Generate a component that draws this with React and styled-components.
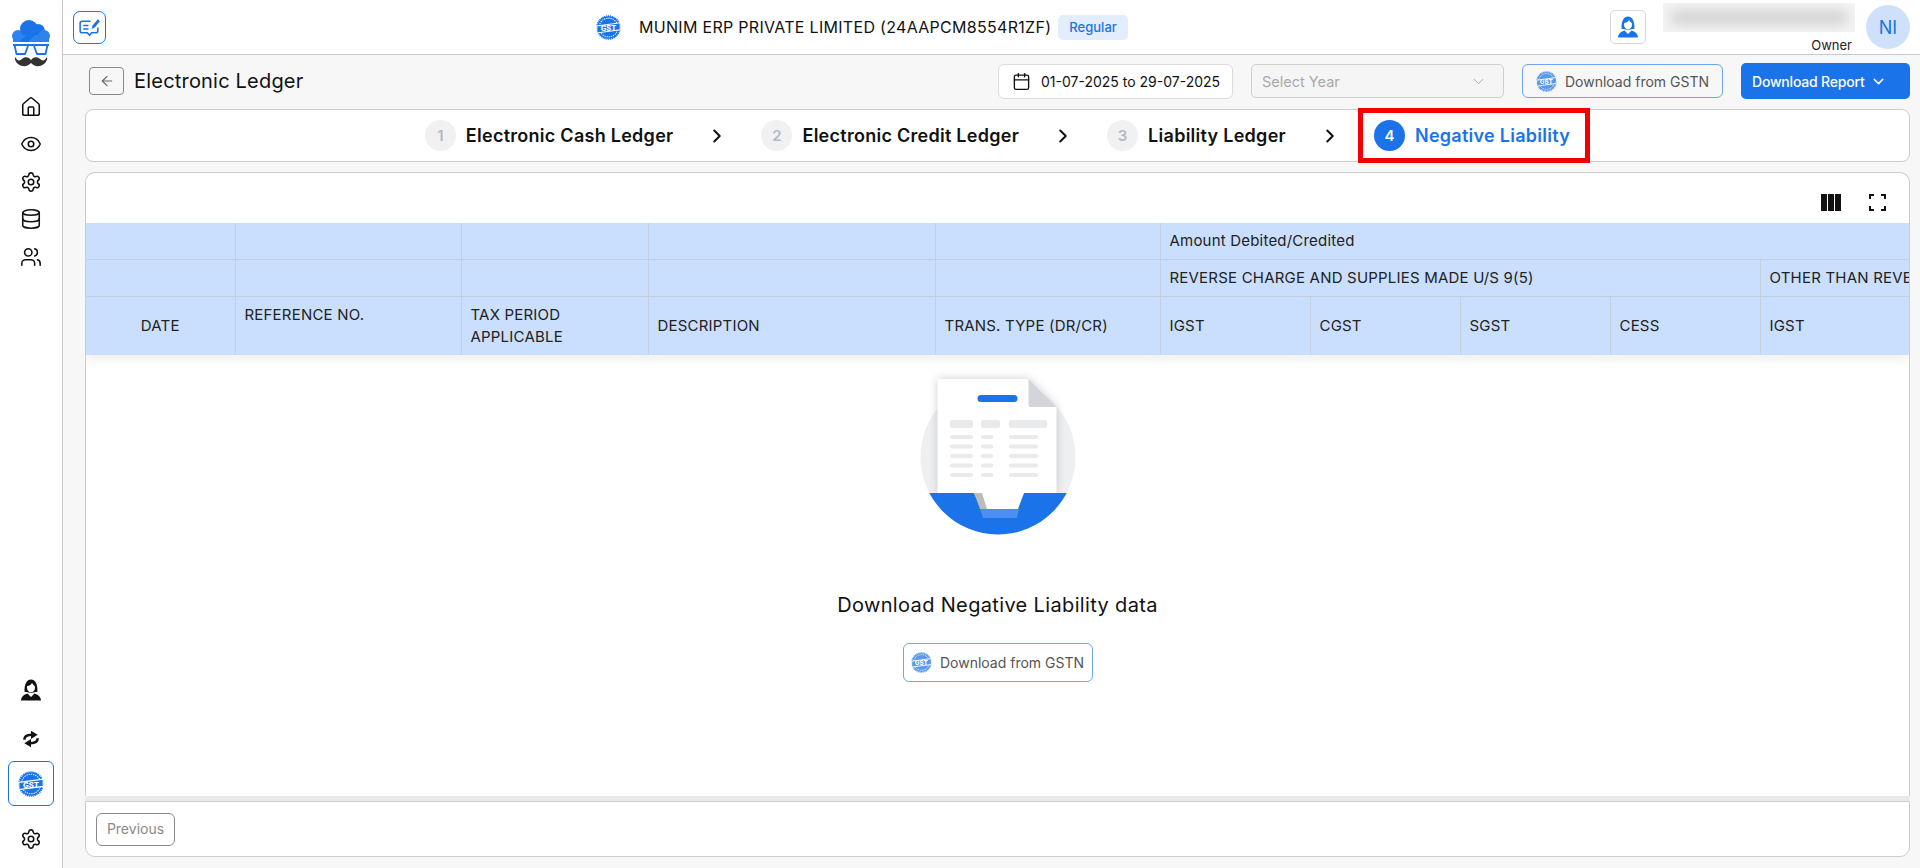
import React from "react";
import styled, { createGlobalStyle } from "styled-components";
import {
  House,
  Eye,
  Settings,
  Database,
  Users,
  Calendar,
  ChevronDown,
  ChevronRight,
  ArrowLeft,
} from "lucide-react";

const blue = "#1a73e8";

const GlobalStyle = createGlobalStyle`
  html, body, #root {
    height: 100%;
    margin: 0;
  }
  body {
    font-family: Inter, "Noto Sans", "Liberation Sans", sans-serif;
    color: #111;
    background: #f7f7f7;
    overflow: hidden;
  }
  * {
    box-sizing: border-box;
  }
`;

//Drawings
const GstIcon = ({ size = 25 }) => (
  <svg width={size} height={size} viewBox="0 0 32 32">
    <circle cx="16" cy="16" r="14.500" fill={blue} stroke={blue} strokeWidth="2.500" strokeDasharray="1.400 1" />
    <circle cx="16" cy="16" r="12" fill="none" stroke="#fff" strokeWidth="1.300" strokeDasharray="1.600 1.200" />
    <path d="M1 14 L31 10 L31 19 L1 23 Z" fill={blue} stroke="#fff" strokeWidth="1.400" />
    <text x="16" y="20.500" textAnchor="middle" fontSize="9.500" fontWeight="800" fill="#fff" fontFamily="Inter, sans-serif">
      GST
    </text>
  </svg>
);

const SupportIcon = ({ size = 24, color = "#111" }) => (
  <svg width={size} height={size} viewBox="0 0 24 24">
    <path d="M5.600 14C5 6 8 1.500 12 1.500S19 6 18.400 14h-1.600L12 15l-4.800-1z" fill={color} />
    <ellipse cx="12" cy="9.500" rx="4" ry="5" fill="#fff" />
    <path d="M8 8c2 0 4-1 5-3 1 1.500 2 2.500 3 3V5.500L12 3.500 8 5.500z" fill={color} />
    <path d="M2 22.500c.4-4 3-6 6.500-7L12 19l3.500-3.500c3.500 1 6.100 3 6.500 7z" fill={color} />
  </svg>
);

const SwapIcon = () => (
  <svg width="20" height="20" viewBox="0 0 24 24">
    <path d="M4 13c0-3.500 3-6 9-6" fill="none" stroke="#111" strokeWidth="3" />
    <path d="M12 2l8 5-8 5z" fill="#111" />
    <path d="M20 11c0 3.500-3 6-9 6" fill="none" stroke="#111" strokeWidth="3" />
    <path d="M12 12l-8 5 8 5z" fill="#111" />
  </svg>
);

const Logo = () => (
  <svg width="40" height="48" viewBox="0 0 40 48">
    <circle cx="7" cy="17" r="6" fill="#2f83ee" />
    <circle cx="18" cy="10" r="9" fill={blue} />
    <circle cx="27" cy="12" r="7" fill={blue} />
    <circle cx="33" cy="17" r="6" fill="#2f83ee" />
    <rect x="2" y="16" width="36" height="7" fill="#2f83ee" />
    <path d="M8 23 L24 8 L30 10 L17 23 Z" fill={blue} />
    <path d="M2 26 H38" stroke={blue} strokeWidth="2" />
    <path d="M3.500 26 L5.500 35 H14 L17 27 M23 27 L26 35 H34.500 L36.500 26" fill="none" stroke={blue} strokeWidth="1.800" />
    <path d="M20 41c-2-3-6-4-9-1-2 2-5 2-6-1-.5-1-1.500 0-1 1.500 1 4 6 7.500 11 6.500 2-.5 4-2 5-3 1 1 3 2.500 5 3 5 1 10-2.500 11-6.500.5-1.500-.5-2.500-1-1.500-1 3-4 3-6 1-3-3-7-2-9 1z" fill="#333" />
  </svg>
);

const NoteIcon = () => (
  <svg width="25" height="25" viewBox="0 0 24 24" fill="none" stroke={blue} strokeWidth="1.500">
    <path d="M13 6H5a2 2 0 0 0-2 2v7a2 2 0 0 0 2 2h5l2 2.500 2-2.500h4a2 2 0 0 0 2-2v-3" />
    <path d="M6 10h5M6 13.500h5" />
    <path d="M14 13.500l1-3.500 5-6 2 2-5 6z" fill={blue} stroke="none" />
  </svg>
);

const ColumnsIcon = () => (
  <svg width="20" height="17" viewBox="0 0 20 17">
    <path d="M0 0h6v17H0zM7 0h6v17H7zM14 0h6v17h-6z" fill="#111" />
  </svg>
);

const FullscreenIcon = () => (
  <svg width="17" height="17" viewBox="0 0 17 17" fill="none" stroke="#111" strokeWidth="2">
    <path d="M1 5V1h4M12 1h4v4M16 12v4h-4M5 16H1v-4" />
  </svg>
);

const paperShape = "M17.500 0 H108.500 L136.500 28 V114 H17.500 Z";

const EmptyArt = () => (
  <ArtSvg width="156" height="156" viewBox="0 0 156 156">
    <defs>
      <filter id="paperShadow" x="-20%" y="-20%" width="140%" height="140%">
        <feGaussianBlur stdDeviation="4" />
      </filter>
      <clipPath id="disc">
        <circle cx="78" cy="78" r="77.500" />
      </clipPath>
    </defs>
    <circle cx="78" cy="78" r="77.500" fill="#eeeff1" />
    <path d={paperShape} fill="#a9acb3" opacity="0.6" filter="url(#paperShadow)" />
    <path d={paperShape} fill="#fff" />
    <path d="M108.500 0 L136.500 28 H110.500 a2 2 0 0 1 -2 -2 Z" fill="#d3d5da" />
    <rect x="57.500" y="16" width="40" height="7" rx="3.500" fill={blue} />
    <g fill="#e9eaec">
      <rect x="30" y="41" width="23" height="8" rx="2" />
      <rect x="61" y="41" width="19" height="8" rx="2" />
      <rect x="89" y="41" width="38" height="8" rx="2" />
      {[56, 65.5, 75, 84.5, 94].map((y) => (
        <g key={y}>
          <rect x="30" y={y} width="23" height="4" rx="2" />
          <rect x="61" y={y} width="12.500" height="4" rx="2" />
          <rect x="89" y={y} width="29" height="4" rx="2" />
        </g>
      ))}
    </g>
    <g clipPath="url(#disc)">
      <rect x="0" y="114" width="156" height="42" fill={blue} />
      <path d="M54 114 H104 L98 130 H62 Z" fill="#fff" />
      <path d="M54 114 H62 L67 130 H60 Z" fill="#bcbcbc" />
      <path d="M60 130 H99 L97 139 H63 Z" fill="#4c8ff0" />
    </g>
  </ArtSvg>
);

//Data
const steps = [
  { label: "Electronic Cash Ledger" },
  { label: "Electronic Credit Ledger" },
  { label: "Liability Ledger" },
  { label: "Negative Liability", active: true },
];

const columnWidths = [149, 226, 187, 287, 225, 150, 150, 150, 150, 150];

function App() {
  return (
    <Shell>
      <GlobalStyle />
      <Sidebar>
        <LogoSlot>
          <Logo />
        </LogoSlot>
        <NavGroup>
          <NavItem><House size={22} strokeWidth={1.7} /></NavItem>
          <NavItem><Eye size={22} strokeWidth={1.7} /></NavItem>
          <NavItem><Settings size={22} strokeWidth={1.7} /></NavItem>
          <NavItem><Database size={22} strokeWidth={1.7} /></NavItem>
          <NavItem><Users size={22} strokeWidth={1.7} /></NavItem>
        </NavGroup>
        <BottomNav>
          <NavItem $tall><SupportIcon /></NavItem>
          <NavItem $tall><SwapIcon /></NavItem>
          <ActiveNav><GstIcon size={26} /></ActiveNav>
          <NavItem $tall><Settings size={22} strokeWidth={1.7} /></NavItem>
        </BottomNav>
      </Sidebar>

      <Main>
        <TopBar>
          <NoteButton><NoteIcon /></NoteButton>
          <Company>
            <GstIcon />
            <CompanyName>MUNIM ERP PRIVATE LIMITED (24AAPCM8554R1ZF)</CompanyName>
            <Badge>Regular</Badge>
          </Company>
          <UserArea>
            <SupportButton><SupportIcon size={24} color={blue} /></SupportButton>
            <UserInfo>
              <BlurBox><span /></BlurBox>
              <Role>Owner</Role>
            </UserInfo>
            <Avatar>NI</Avatar>
          </UserArea>
        </TopBar>

        <Page>
          <TitleRow>
            <BackButton><ArrowLeft size={16} strokeWidth={1.8} /></BackButton>
            <Title>Electronic Ledger</Title>
            <Actions>
              <DateBox>
                <Calendar size={19} strokeWidth={1.7} />
                01-07-2025 to 29-07-2025
              </DateBox>
              <YearSelect>
                Select Year
                <ChevronDown size={17} strokeWidth={1.4} color="#aaa" />
              </YearSelect>
              <GstnButton $width="201px">
                <GstIcon size={21} />
                <span>Download from GSTN</span>
              </GstnButton>
              <ReportButton>
                Download Report
                <ChevronDown size={17} strokeWidth={2} />
              </ReportButton>
            </Actions>
          </TitleRow>

          <StepCard>
            {steps.map((step, index) => (
              <React.Fragment key={step.label}>
                <Step $active={step.active}>
                  <StepNumber $active={step.active}>{index + 1}</StepNumber>
                  <StepLabel $active={step.active}>{step.label}</StepLabel>
                </Step>
                {index < steps.length - 1 && (
                  <StepArrow><ChevronRight size={22} strokeWidth={2.2} /></StepArrow>
                )}
              </React.Fragment>
            ))}
          </StepCard>

          <TableCard>
            <TableTools>
              <ToolButton><ColumnsIcon /></ToolButton>
              <ToolButton><FullscreenIcon /></ToolButton>
            </TableTools>
            <TableWrap>
              <Table>
                <colgroup>
                  {columnWidths.map((width, index) => (
                    <col key={index} style={{ width }} />
                  ))}
                </colgroup>
                <thead>
                  <tr style={{ height: 36 }}>
                    <Th /><Th /><Th /><Th /><Th />
                    <Th colSpan={5}>Amount Debited/Credited</Th>
                  </tr>
                  <tr style={{ height: 37 }}>
                    <Th /><Th /><Th /><Th /><Th />
                    <Th colSpan={4}>REVERSE CHARGE AND SUPPLIES MADE U/S 9(5)</Th>
                    <Th $nowrap>OTHER THAN REVERSE CHARGE</Th>
                  </tr>
                  <tr style={{ height: 59 }}>
                    <Th $center>DATE</Th>
                    <Th $top>REFERENCE NO.</Th>
                    <Th>TAX PERIOD APPLICABLE</Th>
                    <Th>DESCRIPTION</Th>
                    <Th>TRANS. TYPE (DR/CR)</Th>
                    <Th>IGST</Th>
                    <Th>CGST</Th>
                    <Th>SGST</Th>
                    <Th>CESS</Th>
                    <Th>IGST</Th>
                  </tr>
                </thead>
              </Table>
            </TableWrap>
            <EmptyState>
              <EmptyArt />
              <EmptyTitle>Download Negative Liability data</EmptyTitle>
              <GstnButton $width="190px" $height="39px">
                <GstIcon size={21} />
                <span>Download from GSTN</span>
              </GstnButton>
            </EmptyState>
          </TableCard>

          <ScrollBand />
          <FooterCard>
            <PreviousButton>Previous</PreviousButton>
          </FooterCard>
        </Page>
      </Main>
    </Shell>
  );
}

const Shell = styled.div`
  display: flex;
  height: 100vh;
`;

const Sidebar = styled.aside`
  width: 63px;
  flex-shrink: 0;
  background: #fff;
  border-right: 1px solid #c9c9c9;
  display: flex;
  flex-direction: column;
  align-items: center;
`;

const LogoSlot = styled.div`
  height: 88px;
  padding: 19px 0 0 0;
`;

const NavGroup = styled.nav`
  display: flex;
  flex-direction: column;
  align-items: center;
`;

const NavItem = styled.div`
  width: 46px;
  height: ${(p) => (p.$tall ? "49px" : "37.500px")};
  display: flex;
  align-items: center;
  justify-content: center;
  color: #111;
`;

const BottomNav = styled.div`
  margin-top: auto;
  padding-bottom: 5px;
  display: flex;
  flex-direction: column;
  align-items: center;
`;

const ActiveNav = styled.div`
  width: 46px;
  height: 45px;
  border: 1px solid ${blue};
  border-radius: 6px;
  display: flex;
  align-items: center;
  justify-content: center;
  margin: -2px 0 8px;
`;

const Main = styled.div`
  flex: 1;
  min-width: 0;
  display: flex;
  flex-direction: column;
`;

const TopBar = styled.header`
  height: 55px;
  flex-shrink: 0;
  background: #fff;
  border-bottom: 1px solid #c9c9c9;
  display: flex;
  align-items: center;
  padding: 0 10px;
`;

const NoteButton = styled.div`
  width: 33px;
  height: 33px;
  border: 1px solid ${blue};
  border-radius: 7px;
  display: flex;
  align-items: center;
  justify-content: center;
`;

const Company = styled.div`
  margin-left: 490px;
  display: flex;
  align-items: center;
`;

const CompanyName = styled.span`
  margin-left: 18px;
  font-size: 16px;
  letter-spacing: 0.3px;
`;

const Badge = styled.span`
  margin-left: 7px;
  height: 25px;
  padding: 0 11px;
  display: flex;
  align-items: center;
  background: #e2eefd;
  color: ${blue};
  font-size: 13px;
  font-weight: 500;
  border-radius: 5px;
`;

const UserArea = styled.div`
  margin-left: auto;
  display: flex;
  align-items: center;
`;

const SupportButton = styled.div`
  width: 36px;
  height: 34px;
  border: 1px solid #d8d8d8;
  border-radius: 5px;
  display: flex;
  align-items: center;
  justify-content: center;
  margin-right: 17px;
`;

const UserInfo = styled.div`
  width: 192px;
  height: 54px;
  padding-top: 3px;
  display: flex;
  flex-direction: column;
  align-items: flex-end;
  margin-right: 11px;
`;

const BlurBox = styled.div`
  width: 192px;
  height: 29px;
  background: #f4f4f4;
  overflow: hidden;
  span {
    display: block;
    margin: 7px 8px;
    height: 15px;
    background: #d4d4d4;
    filter: blur(6px);
  }
`;

const Role = styled.span`
  margin: 6px 3px 0 0;
  font-size: 13px;
  line-height: 14px;
  color: #222;
`;

const Avatar = styled.div`
  width: 44px;
  height: 44px;
  border-radius: 50%;
  background: #cfe1fa;
  color: ${blue};
  font-size: 18px;
  display: flex;
  align-items: center;
  justify-content: center;
`;

const Page = styled.main`
  flex: 1;
  min-height: 0;
  display: flex;
  flex-direction: column;
  padding: 0 10px 11px 22px;
`;

const TitleRow = styled.div`
  height: 54px;
  flex-shrink: 0;
  padding-bottom: 2px;
  display: flex;
  align-items: center;
`;

const BackButton = styled.div`
  width: 35px;
  height: 28px;
  margin-left: 4px;
  border: 1px solid #8a8a8a;
  border-radius: 4px;
  color: #666;
  display: flex;
  align-items: center;
  justify-content: center;
`;

const Title = styled.h1`
  margin: 0 0 0 10px;
  font-size: 20px;
  letter-spacing: 0.2px;
  font-weight: 400;
  color: #111;
`;

const Actions = styled.div`
  margin-left: auto;
  display: flex;
  align-items: center;
  gap: 18px;
`;

const DateBox = styled.div`
  width: 235px;
  height: 35px;
  background: #fff;
  border: 1px solid #dcdcdc;
  border-radius: 6px;
  display: flex;
  align-items: center;
  gap: 10px;
  padding-left: 13px;
  font-size: 14px;
  color: #111;
`;

const YearSelect = styled.div`
  width: 253px;
  height: 34px;
  border: 1px solid #cfcfcf;
  border-radius: 5px;
  background: #f5f5f5;
  color: #a9a9a9;
  font-size: 14.500px;
  display: flex;
  align-items: center;
  justify-content: space-between;
  padding: 0 16px 0 10px;
`;

const GstnButton = styled.button`
  width: ${(p) => p.$width};
  height: ${(p) => p.$height || "34px"};
  padding: 0;
  background: transparent;
  border: 1px solid #6ea5ee;
  border-radius: 6px;
  display: flex;
  align-items: center;
  justify-content: center;
  gap: 8px;
  font: 400 14px Inter, sans-serif;
  color: #555;
  svg {
    opacity: 0.72;
  }
`;

const ReportButton = styled.button`
  width: 169px;
  height: 36px;
  padding: 0 0 0 11px;
  background: ${blue};
  border: none;
  border-radius: 5px;
  color: #fff;
  font: 500 14px Inter, sans-serif;
  letter-spacing: -0.2px;
  display: flex;
  align-items: center;
  gap: 6px;
`;

const StepCard = styled.section`
  height: 53px;
  flex-shrink: 0;
  background: #fff;
  border: 1px solid #cccccc;
  border-radius: 8px;
  display: flex;
  align-items: center;
  justify-content: center;
`;

const Step = styled.div`
  display: flex;
  align-items: center;
  gap: 10px;
  ${(p) =>
    p.$active &&
    `
    height: 55px;
    margin: 0 -20px 0 -16px;
    padding: 0 20px 0 16px;
    outline: 5px solid #f50000;
    outline-offset: -5px;
  `}
`;

const StepNumber = styled.span`
  width: 31px;
  height: 31px;
  border-radius: 50%;
  background: ${(p) => (p.$active ? blue : "#f1f1f3")};
  color: ${(p) => (p.$active ? "#fff" : "#b5b8c0")};
  font-size: 15px;
  font-weight: 600;
  display: flex;
  align-items: center;
  justify-content: center;
`;

const StepLabel = styled.span`
  font-size: 18px;
  font-weight: 600;
  letter-spacing: 0.27px;
  color: ${(p) => (p.$active ? blue : "#111")};
`;

const StepArrow = styled.span`
  width: 88px;
  display: flex;
  justify-content: center;
  color: #111;
`;

const TableCard = styled.section`
  flex: 1;
  min-height: 0;
  margin-top: 10px;
  background: #fff;
  border: 1px solid #cccccc;
  border-bottom: none;
  border-radius: 10px 10px 0 0;
  display: flex;
  flex-direction: column;
  overflow: hidden;
`;

const TableTools = styled.div`
  height: 50px;
  flex-shrink: 0;
  display: flex;
  align-items: center;
  justify-content: flex-end;
  gap: 28px;
  padding: 8px 23px 0 0;
`;

const ToolButton = styled.span`
  display: flex;
`;

const TableWrap = styled.div`
  overflow: hidden;
  flex-shrink: 0;
  box-shadow: 0 6px 10px rgba(0, 0, 0, 0.06);
`;

const Table = styled.table`
  width: 1824px;
  table-layout: fixed;
  border-collapse: collapse;
  background: #c9dffd;
`;

const Th = styled.th`
  padding: ${(p) => (p.$top ? "7px 9px 0" : "0 9px")};
  vertical-align: ${(p) => (p.$top ? "top" : "middle")};
  text-align: ${(p) => (p.$center ? "center" : "left")};
  border: 1px solid #c5d0de;
  font-size: 15px;
  letter-spacing: 0.2px;
  font-weight: 400;
  line-height: 22px;
  color: #222;
  white-space: ${(p) => (p.colSpan > 1 || p.$nowrap ? "nowrap" : "normal")};
  &:first-child {
    border-left: none;
  }
  thead tr:first-child & {
    border-top: none;
  }
  thead tr:last-child & {
    border-bottom: none;
  }
`;

const EmptyState = styled.div`
  flex: 1;
  min-height: 0;
  padding-top: 24px;
  display: flex;
  flex-direction: column;
  align-items: center;
`;

const ArtSvg = styled.svg`
  overflow: visible;
  flex-shrink: 0;
`;

const EmptyTitle = styled.h2`
  margin: 58px 0 26px;
  font-size: 20px;
  letter-spacing: 0.35px;
  line-height: 24px;
  font-weight: 400;
  color: #111;
`;

const ScrollBand = styled.div`
  height: 5px;
  flex-shrink: 0;
  background: #e9e9e9;
  border-radius: 4px 0 0 0;
`;

const FooterCard = styled.footer`
  height: 56px;
  flex-shrink: 0;
  background: #fff;
  border: 1px solid #cccccc;
  border-radius: 0 0 10px 10px;
  display: flex;
  align-items: center;
  padding-left: 10px;
`;

const PreviousButton = styled.button`
  width: 79px;
  height: 33px;
  padding: 0 0 2px;
  background: #fff;
  border: 1px solid #8a8a8a;
  border-radius: 6px;
  color: #8a8a8a;
  font: 400 14px Inter, sans-serif;
`;

export default App;
